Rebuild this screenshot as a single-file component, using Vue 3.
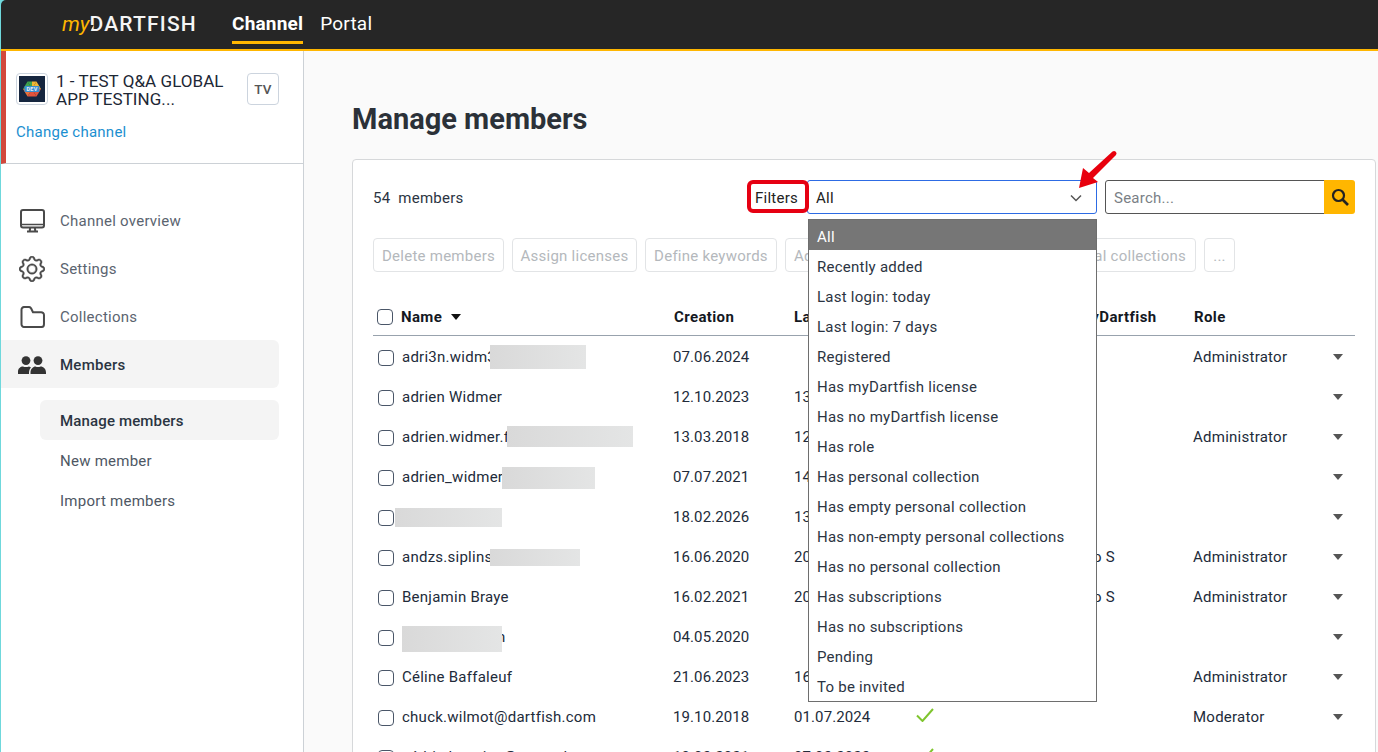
<script setup>
const nav = [
  { label: 'Channel overview', icon: 'monitor' },
  { label: 'Settings', icon: 'gear' },
  { label: 'Collections', icon: 'folder' },
]
const subnav = ['Manage members', 'New member', 'Import members']
const bulk = [
  { label: 'Delete members', w: 131 },
  { label: 'Assign licenses', w: 125 },
  { label: 'Define keywords', w: 132 },
  { label: 'Add keywords', w: 200, start: true },
  { label: 'Create personal collections', w: 203, end: true },
  { label: '...', w: 31 },
]
const options = ['All','Recently added','Last login: today','Last login: 7 days','Registered','Has myDartfish license','Has no myDartfish license','Has role','Has personal collection','Has empty personal collection','Has non-empty personal collections','Has no personal collection','Has subscriptions','Has no subscriptions','Pending','To be invited']
const rows = [
  { name: 'adri3n.widm3', blur: [490, 96, 345, 24], created: '07.06.2024', last: '', role: 'Administrator' },
  { name: 'adrien Widmer', created: '12.10.2023', last: '13.06.2024', role: '' },
  { name: 'adrien.widmer.f', blur: [507, 126, 426, 21], created: '13.03.2018', last: '12.06.2024', role: 'Administrator' },
  { name: 'adrien_widmer', blur: [502, 93, 467, 22], created: '07.07.2021', last: '14.06.2024', role: '' },
  { name: '', blur: [395, 107, 508, 19], created: '18.02.2026', last: '13.06.2024', role: '' },
  { name: 'andzs.siplins', blur: [490, 90, 549, 17], created: '16.06.2020', last: '20.06.2024', role: 'Administrator', plan: 'Pro S' },
  { name: 'Benjamin Braye', created: '16.02.2021', last: '20.06.2024', role: 'Administrator', plan: 'Pro S' },
  { name: 'n', nameRight: true, blur: [402, 100, 626, 26], created: '04.05.2020', last: '', role: '' },
  { name: 'Céline Baffaleuf', created: '21.06.2023', last: '16.06.2024', role: 'Administrator' },
  { name: 'chuck.wilmot@dartfish.com', created: '19.10.2018', last: '01.07.2024', role: 'Moderator', check: true },
  { name: 'cédric.lemoine@example.com', created: '10.03.2021', last: '07.03.2023', role: '', check: true },
]
</script>

<template>
  <div class="page">
    <header class="topbar">
      <div class="logo"><span class="my">my</span><span class="dart">DARTFISH</span></div>
      <nav class="tabs">
        <a class="tab active">Channel</a>
        <a class="tab">Portal</a>
      </nav>
    </header>

    <div class="body">
      <aside class="side">
        <section class="channel">
          <div class="channel-row">
            <div class="thumb">
              <svg width="26" height="26" viewBox="0 0 26 26">
                <rect width="26" height="26" fill="#16263f"/>
                <path d="M13 13 8.500 5.500H13Z" fill="#3fa34d"/>
                <path d="M13 13V5.500h4.500Z" fill="#f2b632"/>
                <path d="M13 13 17.500 5.500 22 13Z" fill="#f2b632"/>
                <path d="M13 13H22L17.500 20.500Z" fill="#e2533c"/>
                <path d="M13 13 17.500 20.500H8.500Z" fill="#e2533c"/>
                <path d="M13 13 8.500 20.500 4 13Z" fill="#e8703a"/>
                <path d="M13 13H4L8.500 5.500Z" fill="#3fa34d"/>
                <rect x="5.500" y="10" width="15" height="6" rx="1" fill="#3a8fd0"/>
                <text x="13" y="15.200" text-anchor="middle" font-size="5.500" font-weight="700" fill="#e6eef6">DEV</text>
              </svg>
            </div>
            <div class="channel-name">1 - TEST Q&amp;A GLOBAL APP TESTING...</div>
            <div class="tv">TV</div>
          </div>
          <a class="change">Change channel</a>
        </section>

        <nav class="menu">
          <a v-for="n in nav" :key="n.label" class="item">
            <span class="ico">
              <svg v-if="n.icon === 'monitor'" width="25" height="24" viewBox="0 0 25 24" fill="none" stroke="#4a4a4a" stroke-width="2"><rect x="1" y="1" width="23" height="17.500" rx="2"/><path d="M1 15.500h23" stroke-width="1.500"/><path d="M10.200 18.500 9.700 22M14.800 18.500l.5 3.500M7 22.500h11"/></svg>
              <svg v-else-if="n.icon === 'gear'" width="26" height="26" viewBox="0 0 16 16" fill="#4a4a4a" stroke="#4a4a4a" stroke-width=".25"><path d="M8 4.754a3.246 3.246 0 1 0 0 6.492 3.246 3.246 0 0 0 0-6.492zM5.754 8a2.246 2.246 0 1 1 4.492 0 2.246 2.246 0 0 1-4.492 0z"/><path d="M9.796 1.343c-.527-1.790-3.065-1.790-3.592 0l-.094.319a.873.873 0 0 1-1.255.520l-.292-.160c-1.640-.892-3.433.902-2.540 2.541l.159.292a.873.873 0 0 1-.520 1.255l-.319.094c-1.790.527-1.790 3.065 0 3.592l.319.094a.873.873 0 0 1 .520 1.255l-.160.292c-.892 1.640.901 3.434 2.541 2.540l.292-.159a.873.873 0 0 1 1.255.520l.094.319c.527 1.790 3.065 1.790 3.592 0l.094-.319a.873.873 0 0 1 1.255-.520l.292.160c1.640.893 3.434-.902 2.540-2.541l-.159-.292a.873.873 0 0 1 .520-1.255l.319-.094c1.790-.527 1.790-3.065 0-3.592l-.319-.094a.873.873 0 0 1-.520-1.255l.160-.292c.893-1.640-.902-3.433-2.541-2.540l-.292.159a.873.873 0 0 1-1.255-.520l-.094-.319zm-2.633.283c.246-.835 1.428-.835 1.674 0l.094.319a1.873 1.873 0 0 0 2.693 1.115l.291-.160c.764-.415 1.600.420 1.184 1.185l-.159.292a1.873 1.873 0 0 0 1.116 2.692l.318.094c.835.246.835 1.428 0 1.674l-.319.094a1.873 1.873 0 0 0-1.115 2.693l.160.291c.415.764-.420 1.600-1.185 1.184l-.291-.159a1.873 1.873 0 0 0-2.693 1.116l-.094.318c-.246.835-1.428.835-1.674 0l-.094-.319a1.873 1.873 0 0 0-2.692-1.115l-.292.160c-.764.415-1.600-.420-1.184-1.185l.159-.291A1.873 1.873 0 0 0 1.945 8.930l-.319-.094c-.835-.246-.835-1.428 0-1.674l.319-.094A1.873 1.873 0 0 0 3.060 4.377l-.160-.292c-.415-.764.420-1.600 1.185-1.184l.292.159a1.873 1.873 0 0 0 2.692-1.115l.094-.319z"/></svg>
              <svg v-else width="25" height="22" viewBox="0 0 26 23" fill="none" stroke="#4a4a4a" stroke-width="2.100" stroke-linejoin="round"><path d="M1.500 4a3 3 0 0 1 3-3h4.500c1.200 0 2 .6 2.600 1.600L13.500 6.500H22a3 3 0 0 1 3 3V19a3 3 0 0 1-3 3H4.500a3 3 0 0 1-3-3Z"/></svg>
            </span>
            <span>{{ n.label }}</span>
          </a>
          <a class="item current">
            <span class="ico">
              <svg width="28" height="18" viewBox="0 0 28 18" fill="#333"><circle cx="8" cy="4.600" r="4.400"/><circle cx="20" cy="4.600" r="4.400"/><path d="M0 18v-2.500c0-3 2.500-5 5-5 1.500.8 4 .8 6 0 .8.200 1.500.5 2 1-1.200 1.400-2 3.200-2 5V18Z"/><path d="M12.500 18v-1.500c0-3.500 2.800-6 5-6 1.500.8 3.500.8 5 0 3 0 5.500 2.500 5.500 6V18Z"/></svg>
            </span>
            <span>Members</span>
          </a>
        </nav>

        <nav class="sub">
          <a v-for="(s, i) in subnav" :key="s" class="sub-item" :class="{ on: i === 0 }">{{ s }}</a>
        </nav>
      </aside>

      <main class="main">
        <h1>Manage members</h1>
        <section class="card">
          <div class="filterbar">
            <div class="count">54&nbsp; members</div>
            <div class="filters">
              <span class="filter-label">Filters</span>
              <div class="select">
                <span>All</span>
                <svg width="12" height="8" viewBox="0 0 12 8" fill="none" stroke="#555" stroke-width="1.500"><path d="M1 1.500 6 6.500 11 1.500"/></svg>
              </div>
              <div class="search">
                <span class="ph">Search...</span>
              </div>
              <button class="go">
                <svg width="18" height="18" viewBox="0 0 18 18" fill="none" stroke="#222" stroke-width="2.200"><circle cx="7.500" cy="7.500" r="5.500"/><path d="M11.500 11.500 17 17" stroke-width="2.600"/></svg>
              </button>
            </div>
          </div>

          <div class="bulk">
            <button v-for="b in bulk" :key="b.label" class="bulk-btn" :class="{ end: b.end, start: b.start }" :style="{ width: b.w + 'px' }">{{ b.label }}</button>
          </div>

          <div class="grid head">
            <span class="box big"></span>
            <span class="name-h">Name <i class="caret dark"></i></span>
            <span>Creation</span>
            <span>Last login</span>
            <span></span>
            <span>myDartfish</span>
            <span class="role-h">Role</span>
            <span></span>
          </div>
          <div v-for="r in rows" :key="r.created" class="grid row">
            <span class="box"></span>
            <span class="name" :class="{ right: r.nameRight }">{{ r.name }}</span>
            <span class="date first">{{ r.created }}</span>
            <span class="date">{{ r.last }}</span>
            <span class="chk">
              <svg v-if="r.check" width="18" height="14" viewBox="0 0 18 14" fill="none" stroke="#7fc52e" stroke-width="2"><path d="M1 7.500 6.500 13 17 1"/></svg>
            </span>
            <span>{{ r.plan }}</span>
            <span>{{ r.role }}</span>
            <span class="act"><i class="caret"></i></span>
          </div>
        </section>
      </main>
    </div>

    <i v-for="r in rows.filter(x => x.blur)" :key="'b' + r.created" class="blur"
       :style="{ left: r.blur[0] + 'px', width: r.blur[1] + 'px', top: r.blur[2] + 'px', height: r.blur[3] + 'px' }"></i>

    <ul class="dropdown">
      <li v-for="(o, i) in options" :key="o" :class="{ sel: i === 0 }">{{ o }}</li>
    </ul>

    <span class="mark"></span>
    <svg class="arrow" width="46" height="46" viewBox="0 0 46 46">
      <path d="M3 40 7 20 13 25 36.500 3.500a2.500 2.500 0 0 1 3.500 3.500L17 30 22 34Z" fill="#e8000d"/>
    </svg>
  </div>
</template>

<style>
html, body { margin: 0; padding: 0; overflow: hidden; background: #fff; }
</style>

<style scoped>
.page {
  position: relative; width: 1378px; height: 752px; overflow: hidden; box-sizing: border-box; padding-left: 1px;
  font-family: Roboto, "Liberation Sans", sans-serif; font-size: 15px; letter-spacing: .25px; color: #222b3a;
  background: #6fd8dc;
}
.topbar {
  height: 49px; background: #262626; border-bottom: 2px solid #ffb600; border-top-left-radius: 5px;
  display: flex; align-items: stretch; padding-left: 61px; box-sizing: content-box;
}
.logo { width: 170px; display: flex; align-items: center; height: 47px; font-size: 21px; letter-spacing: 1.2px; }
.my { color: #ffb600; font-style: italic; font-weight: 400; letter-spacing: 0; }
.dart { color: #f5f5f5; font-weight: 500; position: relative; }
.dart::before { content: ""; position: absolute; left: -2px; bottom: 5px; width: 4px; height: 6px; background: #262626; transform: skewX(-30deg); }
.tabs { display: flex; gap: 17px; }
.tab { color: #fff; font-size: 19px; letter-spacing: .2px; height: 44px; line-height: 47px; box-sizing: border-box; }
.tab.active { font-weight: 700; border-bottom: 3px solid #ffb600; }
.body { display: flex; height: 701px; background: #fafafa; }
.side {
  flex: none; background: #fff; border-right: 1px solid #ccd1d6;
  box-sizing: border-box; width: 303px;
}
.channel {
  height: 113px; box-sizing: border-box; border-left: 5px solid #d2483c; border-bottom: 1px solid #ccd1d6;
  padding: 22px 24px 0 10px;
}
.channel-row { display: flex; align-items: flex-start; gap: 8px; }
.thumb { width: 32px; height: 32px; border: 1px solid #ccd4de; border-radius: 4px; box-sizing: border-box; display: flex; align-items: center; justify-content: center; flex: none; }
.channel-name { width: 191px; margin-top: -1px; font-size: 17px; letter-spacing: .05px; line-height: 18px; color: #1d2735; }
.tv { width: 32px; height: 32px; border: 1px solid #ccd4de; border-radius: 4px; box-sizing: border-box; display: flex; align-items: center; justify-content: center; font-size: 13.500px; font-weight: 500; color: #555; flex: none; }
.change { display: block; margin-top: 15px; color: #1b8fd0; font-size: 15px; }
.menu { padding-top: 33px; }
.item { display: flex; align-items: center; height: 48px; width: 278px; color: #5b6470; font-size: 15px; border-radius: 0 6px 6px 0; }
.ico { width: 59px; display: flex; justify-content: center; padding-left: 3px; box-sizing: border-box; flex: none; }
.item.current { background: #f4f4f4; color: #2b3442; font-weight: 500; margin-top: -1px; padding-top: 2px; box-sizing: border-box; }
.sub { padding: 12px 0 0 39px; }
.sub-item { display: flex; align-items: center; padding: 2px 0 0 20px; width: 239px; height: 40px; box-sizing: border-box; color: #4e5764; border-radius: 6px; font-size: 15px; }
.sub-item.on { background: #f4f4f4; color: #2b3442; font-weight: 500; letter-spacing: .15px; }
.main { flex: 1; padding: 0 2px 0 48px; min-width: 0; }
h1 { margin: 0; padding-top: 50px; height: 108px; box-sizing: border-box; font-size: 29px; font-weight: 700; line-height: 36px; letter-spacing: 0; color: #2b3138; }
.card { background: #fff; border: 1px solid #d6d8da; border-radius: 4px 4px 0 0; padding: 20px 20px 0; height: 620px; box-sizing: border-box; }
.filterbar { display: flex; justify-content: space-between; align-items: center; height: 34px; }
.count { color: #2b3442; padding-top: 1px; }
.filters { display: flex; align-items: center; }
.filter-label { width: 60px; box-sizing: border-box; padding: 1px 0 0 8px; color: #222; white-space: nowrap; }
.select { width: 290px; height: 34px; box-sizing: border-box; border: 1px solid #2d6be4; border-radius: 3px; display: flex; align-items: center; justify-content: space-between; padding: 1px 14px 0 8px; color: #222; margin-right: 8px; }
.search { width: 220px; height: 34px; box-sizing: border-box; border: 1px solid #555; border-radius: 3px 0 0 3px; padding: 1px 0 0 8px; display: flex; align-items: center; color: #7a7f86; }
.go { width: 31px; height: 34px; margin-left: -1px; border: 0; background: #ffb600; border-radius: 0 3px 3px 0; display: flex; align-items: center; justify-content: center; padding: 0; position: relative; }
.bulk { display: flex; gap: 8px; margin-top: 24px; }
.bulk-btn { height: 34px; background: #fff; border: 1px solid #e2e4e6; border-radius: 4px; color: #b4b8bc; font: inherit; letter-spacing: inherit; padding: 2px 0 0; white-space: nowrap; overflow: hidden; flex: none; }
.bulk-btn.end { text-align: right; padding-right: 9px; }
.bulk-btn.start { text-align: left; padding-left: 8px; }
.grid { display: grid; grid-template-columns: 29px 272px 120px 122px 162px 115px 140px 15px; align-items: center; width: 975px; }
.head { height: 40px; margin-top: 24px; margin-bottom: 1px; padding-top: 3px; box-sizing: border-box; font-weight: 700; letter-spacing: .38px; color: #14181f; border-bottom: 1px solid #98a2ad; width: 982px; }
.row { height: 40px; }
.box { width: 14px; height: 14px; border: 1px solid #4a5668; border-radius: 4px; box-sizing: content-box; background: #fff; align-self: start; margin: 13px 0 0 5px; }
.box.big { margin: 10px 0 0 4px; }
.name-h { margin-left: -1px; }
.role-h { margin-left: 1px; }
.date { letter-spacing: .1px; }
.date.first { margin-left: -1px; }
.caret { display: inline-block; width: 0; height: 0; border-left: 5.500px solid transparent; border-right: 5.500px solid transparent; border-top: 6px solid #555; }
.caret.dark { border-top-color: #111; margin-left: 5px; vertical-align: 2px; }
.act { display: flex; justify-content: flex-start; }
.name.right { padding-left: 95px; }
.blur { position: absolute; background: linear-gradient(90deg, #d9d9d9, #e4e5e5); }
.dropdown {
  position: absolute; left: 808px; top: 219px; width: 289px; margin: 0; padding: 0 0 1px; list-style: none; box-sizing: border-box;
  background: #fff; border: 1px solid #6e6e6e;
}
.dropdown li { height: 30px; line-height: 31px; padding: 2px 0 0 8px; box-sizing: border-box; color: #2b3442; }
.dropdown li.sel { background: #767676; color: #fff; }
.mark { position: absolute; left: 747px; top: 180px; width: 62px; height: 33px; box-sizing: border-box; border: 4px solid #e60012; border-radius: 6px; }
.arrow { position: absolute; left: 1076px; top: 148px; }
</style>
